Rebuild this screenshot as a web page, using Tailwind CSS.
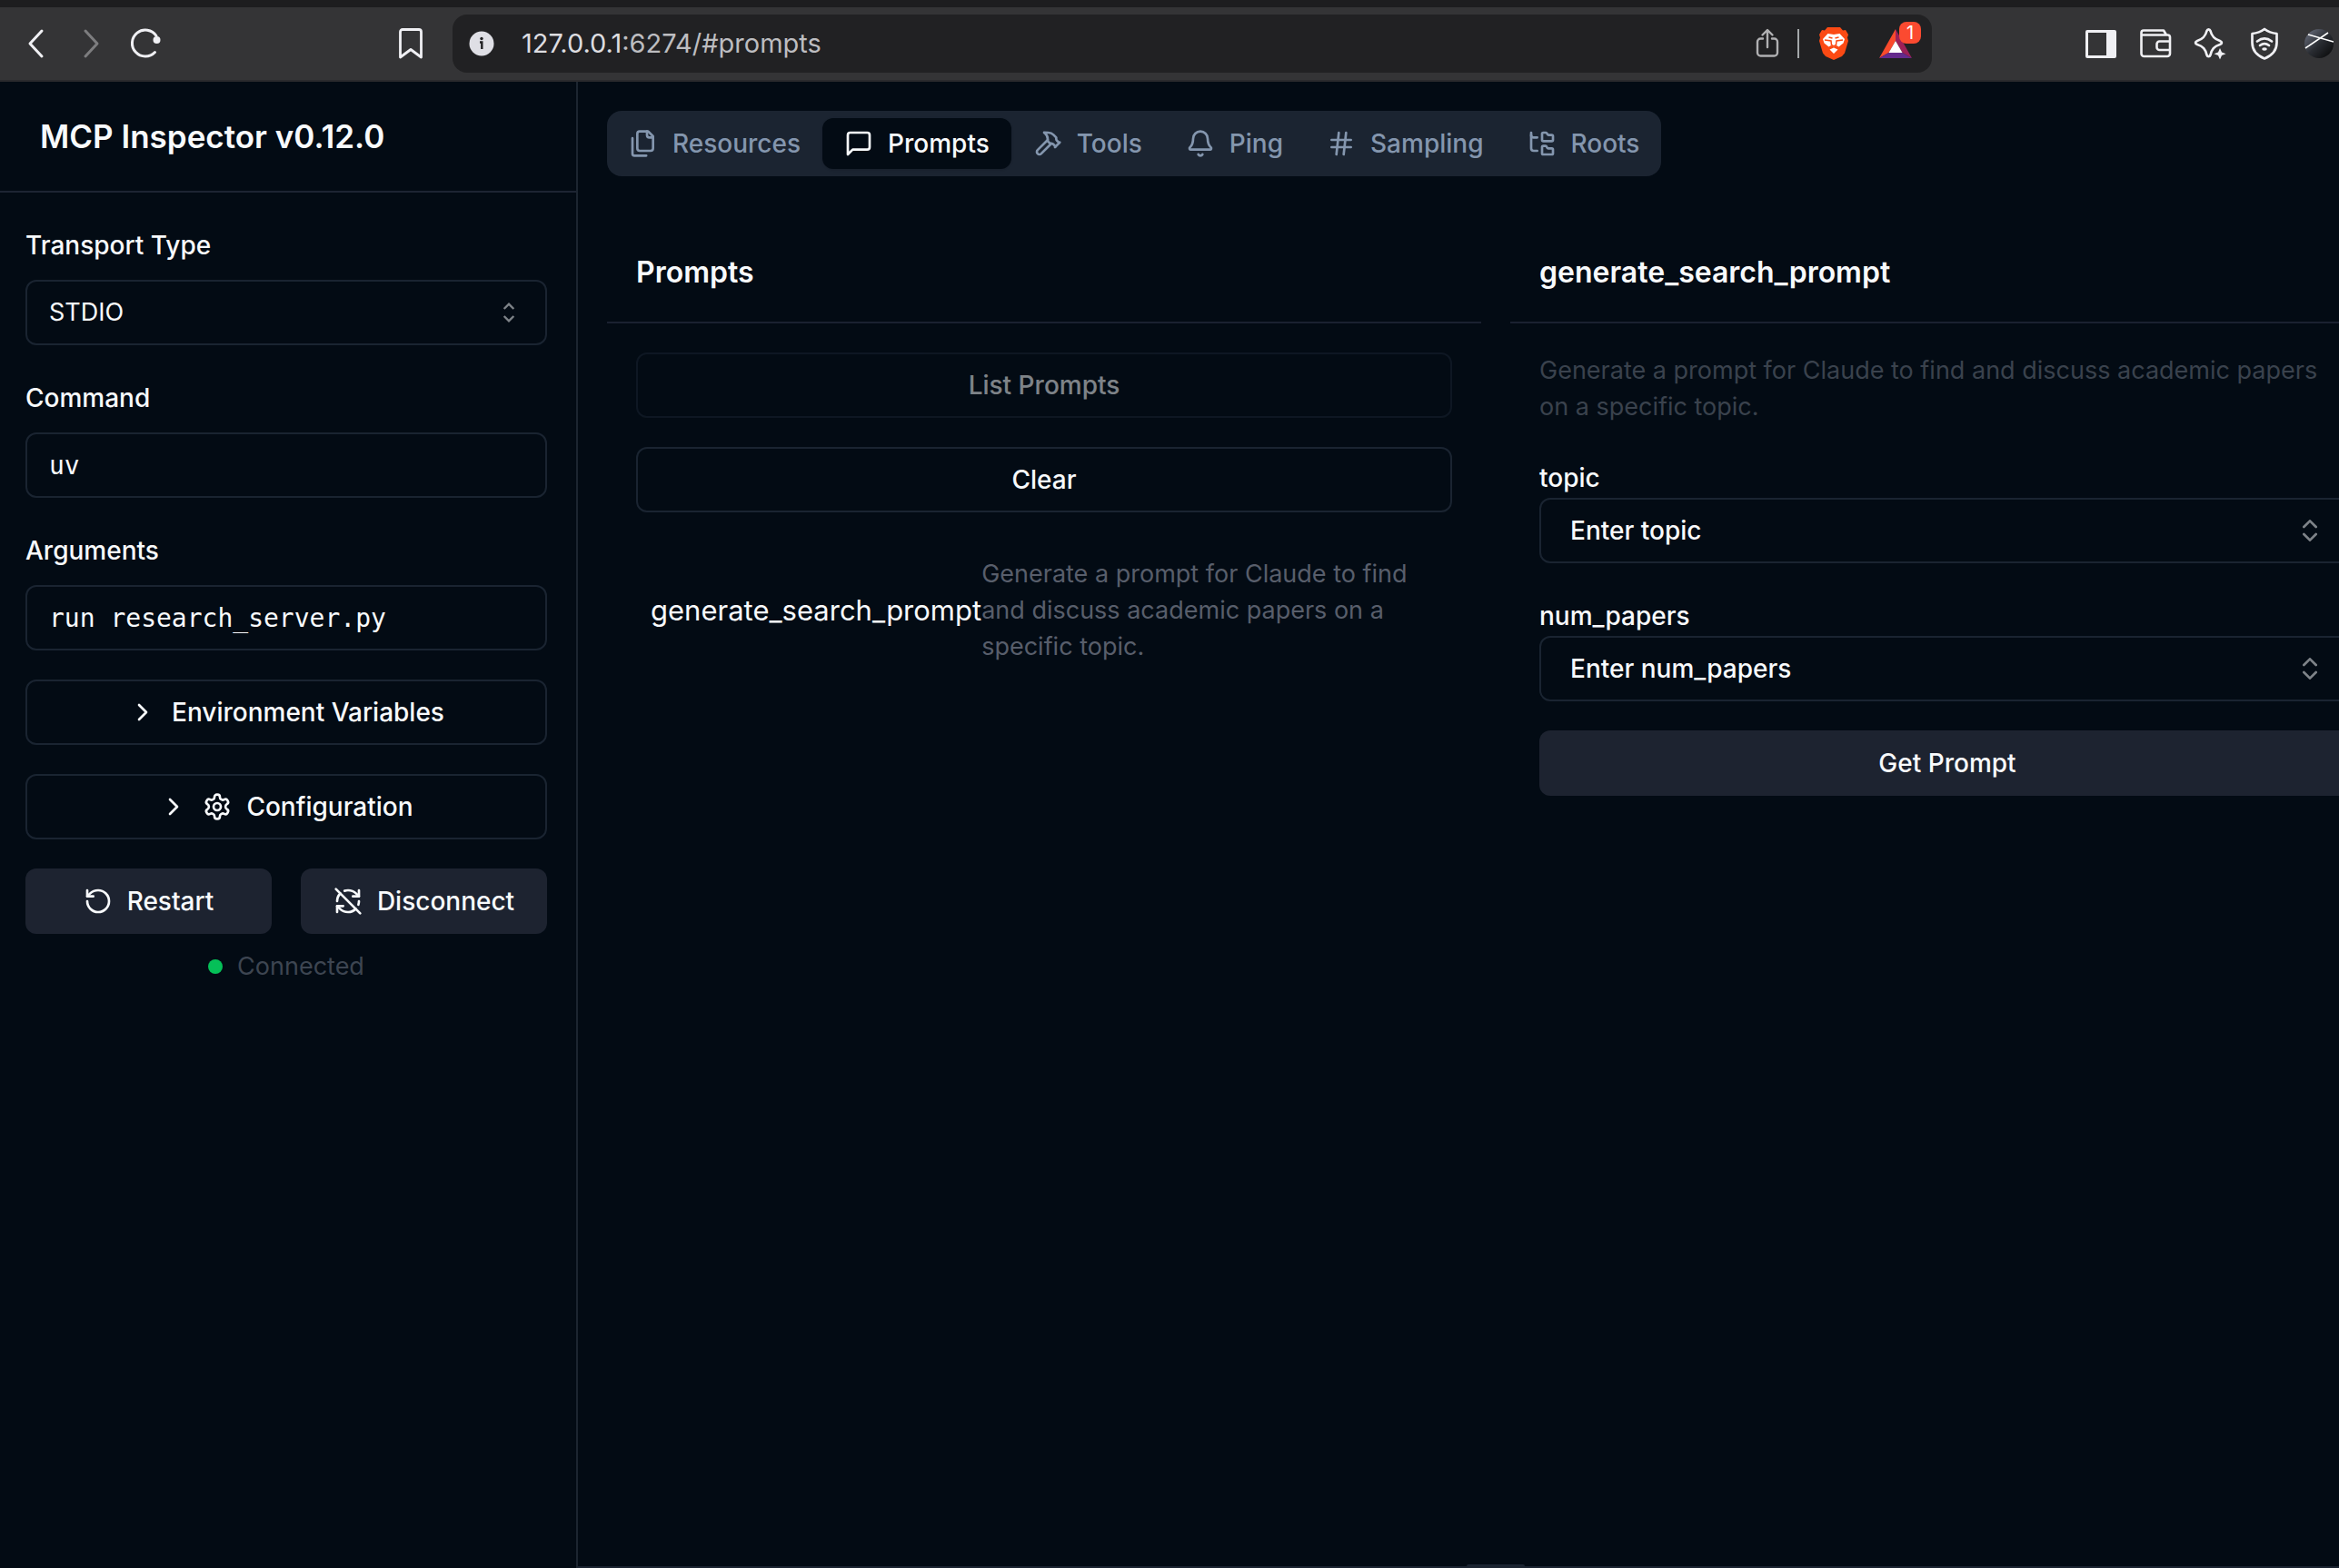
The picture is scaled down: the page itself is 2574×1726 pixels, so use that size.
<!DOCTYPE html>
<html lang="en">
<head>
  <meta charset="UTF-8" />
  <meta name="viewport" content="width=device-width, initial-scale=1.0"/>
  <title>MCP Inspector</title>
  <script src="https://cdn.jsdelivr.net/npm/@tailwindcss/browser@4"></script>
</head>
<body class="h-screen flex flex-col overflow-hidden bg-[#030b14] font-['Inter',sans-serif] text-[28px] leading-10 text-[#f8fafc]">

  <!-- Browser toolbar -->
  <header class="flex items-center h-[90px] shrink-0 border-t-8 border-t-[#1d1d1f] border-b-2 border-b-[#2a2a2d] bg-[#343436] text-[#f0f0f4]">
    <nav class="flex items-center w-[498px] shrink-0 pl-[10px] pr-4">
      <button aria-label="Back" class="w-[60px] flex justify-center">
        <svg class="size-9" viewBox="0 0 36 36" fill="none" stroke="currentColor" stroke-width="3" stroke-linecap="round" stroke-linejoin="round"><path d="M24 4 11 18l13 14"/></svg>
      </button>
      <button aria-label="Forward" class="w-[60px] flex justify-center text-[#7d7d7f]">
        <svg class="size-9" viewBox="0 0 36 36" fill="none" stroke="currentColor" stroke-width="3" stroke-linecap="round" stroke-linejoin="round"><path d="m12 4 13 14-13 14"/></svg>
      </button>
      <button aria-label="Reload" class="w-[60px] flex justify-center">
        <svg class="size-9" viewBox="0 0 36 36" fill="none" stroke="currentColor" stroke-width="3" stroke-linecap="round"><path d="M28.500 27.500A14.500 14.500 0 1 1 30 9.500"/><circle cx="30.500" cy="14" r="4" fill="currentColor" stroke="none"/></svg>
      </button>
      <button aria-label="Bookmark" class="w-[60px] flex justify-center ml-auto">
        <svg class="size-9" viewBox="0 0 36 36" fill="none" stroke="currentColor" stroke-width="2.800" stroke-linejoin="round"><path d="M9 2.500h18a2.500 2.500 0 0 1 2.500 2.500v28L18 24.500 6.500 33V5A2.500 2.500 0 0 1 9 2.500Z"/></svg>
      </button>
    </nav>

    <div class="flex items-center flex-1 h-16 rounded-2xl bg-[#212123] pl-4">
      <button aria-label="Site information" class="w-8 flex justify-center text-[#dfdfe5]">
        <svg class="size-7" viewBox="0 0 28 28"><circle cx="14" cy="14" r="13.500" fill="currentColor"/><circle cx="14" cy="8.500" r="1.700" fill="#212123"/><path d="M12 12.500h2.300V20" fill="none" stroke="#212123" stroke-width="2.400"/></svg>
      </button>
      <label for="address" class="pl-7 text-[29px] text-[#dddde0]">127.0.0.1</label>
      <input id="address" type="text" value=":6274/#prompts" class="flex-1 min-w-0 bg-transparent text-[29px] text-[#bdbdc0] outline-none" />
      <div class="flex items-center">
        <button aria-label="Share" class="w-[46px] flex justify-center text-[#b0b0b2]">
          <svg class="size-9" viewBox="0 0 36 36" fill="none" stroke="currentColor" stroke-width="2.400" stroke-linecap="round" stroke-linejoin="round"><path d="M13 12.500h-2.500a3.500 3.500 0 0 0-3.500 3.500v12a3.500 3.500 0 0 0 3.500 3.500h15a3.500 3.500 0 0 0 3.500-3.500V16a3.500 3.500 0 0 0-3.500-3.500H23M18 22V3.500M12.500 8.500 18 3l5.500 5.500"/></svg>
        </button>
        <span class="w-[2px] h-8 ml-[10px] mr-1 bg-[#a4a8aa]"></span>
        <button aria-label="Brave Shields" class="w-[68px] flex justify-center">
          <svg class="size-9" viewBox="0 0 36 36"><path d="M11 0h14l3 3.500 3-.5 3 5-1 3.500 1 3.500-4 13.500-3 3.500-9 4-9-4-3-3.500L2 15l1-3.500L2 8l3-5 3 .5z" fill="#fb4a14"/><path d="m11.500 7 6.500 1 6.500-1 5.500 6-1.500 4.500-5 4-2.500-1.500-3 1.500-3-1.500-2.500 1.500-5-4L6 13zM18 22.500l4.500 2-4.500 4.500-4.500-4.500z" fill="#fff"/><path d="m8 14 7 1 .5 4.500 2.500 1.500 2.500-1.500.5-4.500 7-1M12.500 11l4 1M23.500 11l-4 1" fill="none" stroke="#fb4a14" stroke-width="1.500"/></svg>
        </button>
        <button aria-label="Brave Rewards" class="relative w-[68px] flex justify-center mr-[6px]">
          <svg class="size-9" viewBox="0 0 36 36"><path d="M18 2 0 34l10.500-6L18 15z" fill="#fa4a2c"/><path d="m18 2 18 32-10.500-6L18 15z" fill="#9c2058"/><path d="M0 34h36l-10.500-6h-15z" fill="#642a8c"/><path d="m18 15 7.500 13h-15z" fill="#fff"/></svg>
          <span class="absolute -top-[6px] right-[6px] w-6 h-6 rounded-lg bg-[#fb4a30] text-center text-xl leading-6 text-white">1</span>
        </button>
      </div>
    </div>

    <nav class="flex items-center ml-[156px] -mr-2 shrink-0">
      <button aria-label="Sidebar" class="w-[60px] flex justify-center">
        <svg class="size-9" viewBox="0 0 36 36"><path fill-rule="evenodd" d="M3 3h30a2 2 0 0 1 2 2v27a2 2 0 0 1-2 2H3a2 2 0 0 1-2-2V5a2 2 0 0 1 2-2Zm1 3v25h20V6Z" fill="currentColor"/></svg>
      </button>
      <button aria-label="Wallet" class="w-[60px] flex justify-center">
        <svg class="size-9" viewBox="0 0 36 36" fill="none" stroke="currentColor" stroke-width="2.600" stroke-linejoin="round"><path d="M2.500 8.500V6A2.500 2.500 0 0 1 5 3.500h22L30 8.500M2.500 8.500h29a2.500 2.500 0 0 1 2.500 2.500v18a3 3 0 0 1-3 3H5.500a3 3 0 0 1-3-3zM34 15.500H22.500a3 3 0 0 0-3 3V22a3 3 0 0 0 3 3H34"/></svg>
      </button>
      <button aria-label="Leo AI" class="w-[60px] flex justify-center">
        <svg class="size-9" viewBox="0 0 36 36" fill="none" stroke="currentColor" stroke-width="2.700" stroke-linejoin="round"><path d="M14.500 4c.8-2.300 3.200-2.300 4 0 1.500 6 4 9 10.500 11 2.600 1 2.600 3.200 0 4-6.500 2-9 5-10.500 11.500-.8 2.300-3.200 2.300-4 0C13 24 10.500 21 4 19c-2.600-.8-2.600-3 0-4C10.500 13 13 10 14.500 4Z"/><path d="m29 23 2 4.500 4.500 1.800-4.500 1.800-2 4.500-2-4.500-4.500-1.800 4.500-1.800z" fill="currentColor" stroke="none"/></svg>
      </button>
      <button aria-label="VPN" class="w-[60px] flex justify-center">
        <svg class="size-9" viewBox="0 0 36 36" fill="none" stroke="currentColor" stroke-width="2.700" stroke-linecap="round" stroke-linejoin="round"><path d="M18 2c4 3 8.500 4.500 13.500 5v10c0 8-5 14-13.500 17.500C9.500 31 4.500 25 4.500 17V7C9.500 6.500 14 5 18 2Z"/><path d="M10 15.500c5-3.800 11-3.800 16 0M13 20c3-2.300 7-2.300 10 0"/><ellipse cx="18" cy="24" rx="2.800" ry="1.800" fill="currentColor" stroke="none"/></svg>
      </button>
      <button aria-label="Profile" class="w-[60px] flex justify-center">
        <svg class="size-8" viewBox="0 0 32 32">
          <defs><linearGradient id="avatar" x1="0" y1="0" x2="1" y2="1"><stop offset="0" stop-color="#727787"/><stop offset=".5" stop-color="#2a2d33"/><stop offset="1" stop-color="#050505"/></linearGradient></defs>
          <circle cx="16" cy="16" r="16" fill="url(#avatar)"/><path d="M1 21 26 4M4 6l28 8" stroke="#fff" stroke-width="1.600"/>
        </svg>
      </button>
    </nav>
  </header>

  <div class="flex flex-1 min-h-0">
    <!-- Sidebar -->
    <aside class="w-[636px] shrink-0 border-r-2 border-[#1c2530]">
      <div class="flex items-center h-[122px] px-11 border-b-2 border-[#1d2433]">
        <h1 class="text-[35px] font-semibold">MCP Inspector v0.12.0</h1>
      </div>

      <div class="flex flex-col gap-8 pl-7 pr-8 py-8">
        <div class="flex flex-col gap-4">
          <label for="transport" class="pt-1 leading-11 font-medium">Transport Type</label>
          <div class="relative">
            <select id="transport" class="appearance-none w-full h-[72px] px-6 rounded-xl border-2 border-[#1a2431] bg-transparent text-[27px]">
              <option>STDIO</option>
              <option>SSE</option>
              <option>Streamable HTTP</option>
            </select>
            <svg class="absolute right-[26px] top-5 size-8 opacity-50 pointer-events-none" viewBox="0 0 24 24" fill="none" stroke="currentColor" stroke-width="1.800"><path d="m8 9 4-4 4 4M8 15l4 4 4-4"/></svg>
          </div>
        </div>
        <div class="flex flex-col gap-4">
          <label for="command" class="pt-1 leading-11 font-medium">Command</label>
          <input id="command" type="text" value="uv" class="w-full h-[72px] px-6 rounded-xl border-2 border-[#1a2431] bg-transparent font-['DejaVu_Sans_Mono',monospace]" />
        </div>
        <div class="flex flex-col gap-4">
          <label for="arguments" class="pt-1 leading-11 font-medium">Arguments</label>
          <input id="arguments" type="text" value="run research_server.py" class="w-full h-[72px] px-6 rounded-xl border-2 border-[#1a2431] bg-transparent font-['DejaVu_Sans_Mono',monospace]" />
        </div>

        <button class="flex items-center justify-center gap-4 h-[72px] rounded-xl border-2 border-[#1a2431] font-medium">
          <svg class="size-8" viewBox="0 0 24 24" fill="none" stroke="currentColor" stroke-width="2" stroke-linecap="round" stroke-linejoin="round"><path d="m9 18 6-6-6-6"/></svg>
          Environment Variables
        </button>
        <button class="flex items-center justify-center gap-4 h-[72px] rounded-xl border-2 border-[#1a2431] font-medium">
          <svg class="size-8" viewBox="0 0 24 24" fill="none" stroke="currentColor" stroke-width="2" stroke-linecap="round" stroke-linejoin="round"><path d="m9 18 6-6-6-6"/></svg>
          <svg class="size-8" viewBox="0 0 24 24" fill="none" stroke="currentColor" stroke-width="2" stroke-linecap="round" stroke-linejoin="round"><path d="M12.220 2h-.44a2 2 0 0 0-2 2v.18a2 2 0 0 1-1 1.730l-.43.25a2 2 0 0 1-2 0l-.15-.08a2 2 0 0 0-2.730.73l-.22.38a2 2 0 0 0 .73 2.730l.15.1a2 2 0 0 1 1 1.720v.51a2 2 0 0 1-1 1.740l-.15.09a2 2 0 0 0-.73 2.730l.22.38a2 2 0 0 0 2.730.73l.15-.08a2 2 0 0 1 2 0l.43.25a2 2 0 0 1 1 1.730V20a2 2 0 0 0 2 2h.44a2 2 0 0 0 2-2v-.18a2 2 0 0 1 1-1.730l.43-.25a2 2 0 0 1 2 0l.15.08a2 2 0 0 0 2.730-.73l.22-.39a2 2 0 0 0-.73-2.730l-.15-.08a2 2 0 0 1-1-1.740v-.5a2 2 0 0 1 1-1.740l.15-.09a2 2 0 0 0 .73-2.730l-.22-.38a2 2 0 0 0-2.730-.73l-.15.08a2 2 0 0 1-2 0l-.43-.25a2 2 0 0 1-1-1.730V4a2 2 0 0 0-2-2z"/><circle cx="12" cy="12" r="3"/></svg>
          Configuration
        </button>

        <div class="flex flex-col gap-4">
          <div class="grid grid-cols-2 gap-8">
            <button class="flex items-center justify-center gap-4 h-[72px] rounded-xl bg-[#1d2330] font-medium">
              <svg class="size-8" viewBox="0 0 24 24" fill="none" stroke="currentColor" stroke-width="2" stroke-linecap="round" stroke-linejoin="round"><path d="M3 12a9 9 0 1 0 9-9 9.750 9.750 0 0 0-6.740 2.740L3 8"/><path d="M3 3v5h5"/></svg>
              Restart
            </button>
            <button class="flex items-center justify-center gap-4 h-[72px] rounded-xl bg-[#1d2330] font-medium">
              <svg class="size-8" viewBox="0 0 24 24" fill="none" stroke="currentColor" stroke-width="2" stroke-linecap="round" stroke-linejoin="round"><path d="M21 8 18.740 5.740A9.750 9.750 0 0 0 12 3C11 3 10.030 3.160 9.130 3.470"/><path d="M8 16H3v5"/><path d="M3 12C3 9.510 4 7.260 5.640 5.640"/><path d="m3 16 2.260 2.260A9.750 9.750 0 0 0 12 21c2.490 0 4.740-1 6.360-2.640"/><path d="M21 12c0 1-.16 1.970-.47 2.870"/><path d="M21 3v5h-5"/><path d="M22 22 2 2"/></svg>
              Disconnect
            </button>
          </div>
          <div class="flex items-center justify-center gap-4 text-[27px] text-[#3d4551]">
            <span class="size-4 rounded-full bg-[#05c058]"></span>
            <span>Connected</span>
          </div>
        </div>
      </div>
    </aside>

    <!-- Content pane, runs past the right edge of the window -->
    <div class="flex flex-col flex-1 min-w-0 -mr-[82px]">
      <main class="flex-1 px-8 pt-8">
        <div role="tablist" class="inline-flex items-center h-[72px] rounded-2xl bg-[#1b2431] text-[#8496ae] font-medium">
          <button role="tab" class="flex items-center gap-4 h-14 px-6 rounded-xl">
            <svg class="size-8" viewBox="0 0 24 24" fill="none" stroke="currentColor" stroke-width="2" stroke-linecap="round" stroke-linejoin="round"><path d="M20 7h-3a2 2 0 0 1-2-2V2"/><path d="M9 18a2 2 0 0 1-2-2V4a2 2 0 0 1 2-2h7l4 4v10a2 2 0 0 1-2 2Z"/><path d="M3 7.600v12.800A1.600 1.600 0 0 0 4.600 22h9.800"/></svg>
            Resources
          </button>
          <button role="tab" aria-selected="true" class="flex items-center gap-4 h-14 px-6 rounded-xl bg-[#030b14] text-[#f8fafc] shadow">
            <svg class="size-8" viewBox="0 0 24 24" fill="none" stroke="currentColor" stroke-width="2" stroke-linecap="round" stroke-linejoin="round"><path d="M21 15a2 2 0 0 1-2 2H7l-4 4V5a2 2 0 0 1 2-2h14a2 2 0 0 1 2 2z"/></svg>
            Prompts
          </button>
          <button role="tab" class="flex items-center gap-4 h-14 px-6 rounded-xl">
            <svg class="size-8" viewBox="0 0 24 24" fill="none" stroke="currentColor" stroke-width="2" stroke-linecap="round" stroke-linejoin="round"><path d="m15 12-8.373 8.373a1 1 0 1 1-3-3L12 9"/><path d="m18 15 4-4"/><path d="m21.500 11.500-1.914-1.914A2 2 0 0 1 19 8.172V7l-2.260-2.260a6 6 0 0 0-4.202-1.756L9 2.960l.92.82A6.180 6.180 0 0 1 12 8.400V10l2 2h1.172a2 2 0 0 1 1.414.586L18.500 14.500"/></svg>
            Tools
          </button>
          <button role="tab" class="flex items-center gap-4 h-14 px-6 rounded-xl">
            <svg class="size-8" viewBox="0 0 24 24" fill="none" stroke="currentColor" stroke-width="2" stroke-linecap="round" stroke-linejoin="round"><path d="M10.268 21a2 2 0 0 0 3.464 0"/><path d="M3.262 15.326A1 1 0 0 0 4 17h16a1 1 0 0 0 .74-1.673C19.410 13.956 18 12.499 18 8A6 6 0 0 0 6 8c0 4.499-1.411 5.956-2.738 7.326"/></svg>
            Ping
          </button>
          <button role="tab" class="flex items-center gap-4 h-14 px-6 rounded-xl">
            <svg class="size-8" viewBox="0 0 24 24" fill="none" stroke="currentColor" stroke-width="2" stroke-linecap="round" stroke-linejoin="round"><path d="M4 9h16M4 15h16M10 3 8 21M16 3l-2 18"/></svg>
            Sampling
          </button>
          <button role="tab" class="flex items-center gap-4 h-14 px-6 rounded-xl">
            <svg class="size-8" viewBox="0 0 24 24" fill="none" stroke="currentColor" stroke-width="2" stroke-linecap="round" stroke-linejoin="round"><path d="M20 10a1 1 0 0 0 1-1V6a1 1 0 0 0-1-1h-2.500a1 1 0 0 1-.8-.4l-.9-1.200A1 1 0 0 0 15 3h-2a1 1 0 0 0-1 1v5a1 1 0 0 0 1 1Z"/><path d="M20 21a1 1 0 0 0 1-1v-3a1 1 0 0 0-1-1h-2.900a1 1 0 0 1-.88-.55l-.42-.85a1 1 0 0 0-.92-.6H13a1 1 0 0 0-1 1v5a1 1 0 0 0 1 1Z"/><path d="M3 5a2 2 0 0 0 2 2h3"/><path d="M3 3v13a2 2 0 0 0 2 2h3"/></svg>
            Roots
          </button>
        </div>

        <div class="grid grid-cols-2 gap-8 mt-12">
          <section>
            <h2 class="px-8 pt-[34px] pb-[30px] border-b-2 border-[#1a2130] text-[32px] leading-[48px] font-semibold">Prompts</h2>
            <div class="flex flex-col gap-8 p-8">
              <button disabled class="h-[72px] rounded-xl border-2 border-[#1a2431] font-medium opacity-50">List Prompts</button>
              <button class="h-[72px] rounded-xl border-2 border-[#1a2431] font-medium">Clear</button>
              <div class="flex items-center p-4">
                <span class="shrink-0 text-[31px]">generate_search_prompt</span>
                <span class="text-[27px] text-[#585e6b]">Generate a prompt for Claude to find and discuss academic papers on a specific topic.</span>
              </div>
            </div>
          </section>

          <section>
            <h2 class="px-8 pt-[34px] pb-[30px] border-b-2 border-[#1a2130] text-[32px] leading-[48px] font-semibold">generate_search_prompt</h2>
            <div class="flex flex-col gap-8 p-8">
              <p class="pr-5 text-[27px] text-[#3a424d]">Generate a prompt for Claude to find and discuss academic papers on a specific topic.</p>
              <div class="flex flex-col">
                <label for="topic" class="pt-1 leading-11 font-medium">topic</label>
                <button id="topic" role="combobox" aria-expanded="false" class="flex items-center justify-between h-[72px] px-8 rounded-xl border-2 border-[#1a2431] font-medium">
                  Enter topic
                  <svg class="size-8 opacity-50" viewBox="0 0 24 24" fill="none" stroke="currentColor" stroke-width="2" stroke-linecap="round" stroke-linejoin="round"><path d="m7 15 5 5 5-5"/><path d="m7 9 5-5 5 5"/></svg>
                </button>
              </div>
              <div class="flex flex-col">
                <label for="num_papers" class="pt-1 leading-11 font-medium">num_papers</label>
                <button id="num_papers" role="combobox" aria-expanded="false" class="flex items-center justify-between h-[72px] px-8 rounded-xl border-2 border-[#1a2431] font-medium">
                  Enter num_papers
                  <svg class="size-8 opacity-50" viewBox="0 0 24 24" fill="none" stroke="currentColor" stroke-width="2" stroke-linecap="round" stroke-linejoin="round"><path d="m7 15 5 5 5-5"/><path d="m7 9 5-5 5 5"/></svg>
                </button>
              </div>
              <button class="h-[72px] rounded-xl bg-[#1d2330] font-medium">Get Prompt</button>
            </div>
          </section>
        </div>
      </main>

      <!-- Drag handle of the history pane -->
      <div class="flex flex-col items-center">
        <span class="w-16 h-[2px] rounded-t bg-[#1b2431]"></span>
        <span class="w-full h-[2px] bg-[#1b2431]"></span>
      </div>
    </div>
  </div>
</body>
</html>
